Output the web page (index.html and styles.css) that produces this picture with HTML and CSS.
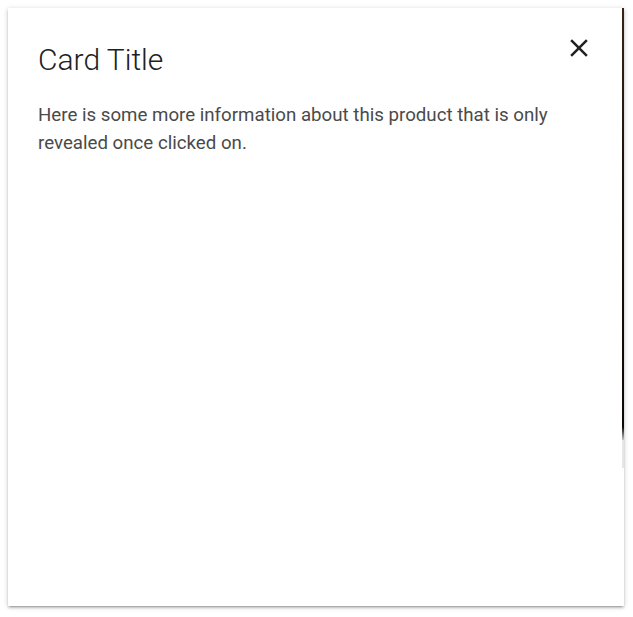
FILE: index.html
```html
<!DOCTYPE html>
<html>
<head>
<meta charset="utf-8">
<link rel="stylesheet" href="styles.css">
</head>
<body>
<div class="card">
  <div class="card-image"></div>
  <div class="card-content"></div>
  <div class="card-reveal">
    <div class="card-title">
      <span>Card Title</span>
      <svg class="close" viewBox="0 0 24 24" width="30" height="30"><path d="M19 6.41L17.59 5 12 10.59 6.41 5 5 6.41 10.59 12 5 17.59 6.41 19 12 13.41 17.59 19 19 17.59 13.41 12z" fill="#212121"/></svg>
    </div>
    <p class="reveal-text">Here is some more information about this product that is only revealed once clicked on.</p>
  </div>
</div>
</body>
</html>
```
FILE: styles.css
```css
html, body {
  margin: 0;
  padding: 0;
  background: #fff;
}
body {
  padding: 8px;
  font-family: Roboto, "Liberation Sans", sans-serif;
}
.card {
  position: relative;
  width: 616px;
  height: 598px;
  overflow: hidden;
  background: #fff;
  box-shadow: 0 2px 2px 0 rgba(0,0,0,.14), 0 3px 1px -2px rgba(0,0,0,.12), 0 1px 5px 0 rgba(0,0,0,.2);
}
.card-image {
  height: 432px;
  background: linear-gradient(180deg, #3a2414 0%, #1a120c 40%, #0d0906 97%, #c9c4bf 100%);
}
.card-content {
  height: 28px;
  background: #e6e6e6;
}
.card-reveal {
  position: absolute;
  top: 0;
  left: 0;
  width: calc(100% - 2px);
  height: 100%;
  box-sizing: border-box;
  background: #fff;
  padding: 30px;
}
.card-title {
  display: flex;
  justify-content: space-between;
  align-items: flex-start;
  font-size: 30px;
  font-weight: 300;
  line-height: 43px;
  color: #212121;
}
.close {
  display: block;
  margin-top: -5px;
  margin-right: -2px;
}
.reveal-text {
  margin: 20px 0 0;
  font-size: 18.7px;
  line-height: 28px;
  color: #4a4a4a;
}
```
